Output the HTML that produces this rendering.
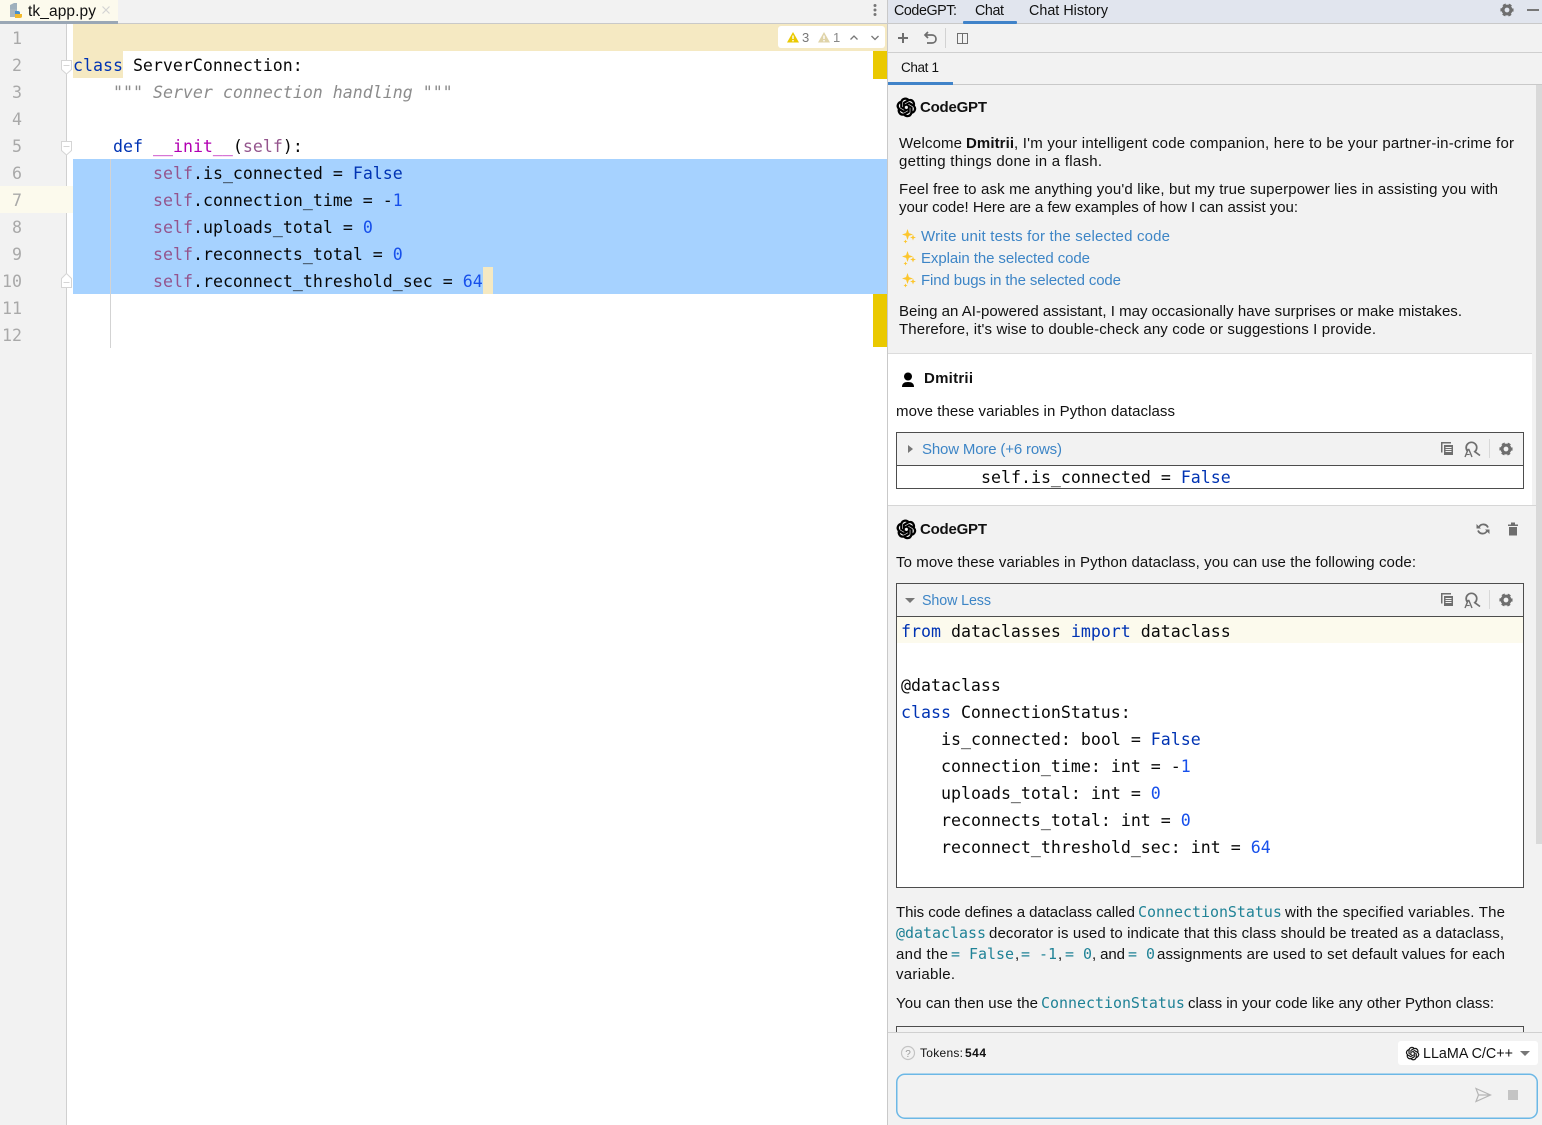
<!DOCTYPE html>
<html><head><meta charset="utf-8"><title>tk_app.py</title>
<style>
html,body{margin:0;padding:0;background:#fff;width:1542px;height:1125px;overflow:hidden}
svg{display:block}
text{white-space:pre}
.c{font-family:"DejaVu Sans Mono","Liberation Mono",monospace;font-size:16.6px;fill:#080808}
.n{font-family:"DejaVu Sans Mono","Liberation Mono",monospace;font-size:16.6px;fill:#a9a9a9}
.u{font-family:"Liberation Sans",sans-serif;font-size:15px;fill:#111}
.h{font-size:14.3px}
.b{font-weight:bold}
.l{fill:#3d85c6}
.m{font-family:"DejaVu Sans Mono","Liberation Mono",monospace;font-size:14.95px;fill:#1f8296}
.k{fill:#0033b3}.s{fill:#94558d}.d{fill:#1750eb}.f{fill:#b200b2}
.i{fill:#8c8c8c;font-style:italic}
</style></head><body>
<svg width="1542" height="1125" viewBox="0 0 1542 1125" xmlns="http://www.w3.org/2000/svg">
<defs>
<path id="ai" d="M22.2819 9.8211a5.9847 5.9847 0 0 0-.5157-4.9108 6.0462 6.0462 0 0 0-6.5098-2.9A6.0651 6.0651 0 0 0 4.9807 4.1818a5.9847 5.9847 0 0 0-3.9977 2.9 6.0462 6.0462 0 0 0 .7427 7.0966 5.98 5.98 0 0 0 .511 4.9107 6.051 6.051 0 0 0 6.5146 2.9001A5.9847 5.9847 0 0 0 13.2599 24a6.0557 6.0557 0 0 0 5.7718-4.2058 5.9894 5.9894 0 0 0 3.9977-2.9001 6.0557 6.0557 0 0 0-.7475-7.0729zm-9.022 12.6081a4.4755 4.4755 0 0 1-2.8764-1.0408l.1419-.0804 4.7783-2.7582a.7948.7948 0 0 0 .3927-.6813v-6.7369l2.02 1.1686a.071.071 0 0 1 .038.052v5.5826a4.504 4.504 0 0 1-4.4945 4.4944zm-9.6607-4.1254a4.4708 4.4708 0 0 1-.5346-3.0137l.142.0852 4.783 2.7582a.7712.7712 0 0 0 .7806 0l5.8428-3.3685v2.3324a.0804.0804 0 0 1-.0332.0615L9.74 19.9502a4.4992 4.4992 0 0 1-6.1408-1.6464zM2.3408 7.8956a4.485 4.485 0 0 1 2.3655-1.9728V11.6a.7664.7664 0 0 0 .3879.6765l5.8144 3.3543-2.0201 1.1685a.0757.0757 0 0 1-.071 0l-4.8303-2.7865A4.504 4.504 0 0 1 2.3408 7.872zm16.5963 3.8558L13.1038 8.364 15.1192 7.2a.0757.0757 0 0 1 .071 0l4.8303 2.7913a4.4944 4.4944 0 0 1-.6765 8.1042v-5.6772a.79.79 0 0 0-.407-.667zm2.0107-3.0231l-.142-.0852-4.7735-2.7818a.7759.7759 0 0 0-.7854 0L9.409 9.2297V6.8974a.0662.0662 0 0 1 .0284-.0615l4.8303-2.7866a4.4992 4.4992 0 0 1 6.6802 4.66zM8.3065 12.863l-2.02-1.1638a.0804.0804 0 0 1-.038-.0567V6.0742a4.4992 4.4992 0 0 1 7.3757-3.4537l-.142.0805L8.704 5.459a.7948.7948 0 0 0-.3927.6813zm1.0976-2.3654l2.602-1.4998 2.6069 1.4998v2.9994l-2.5974 1.4997-2.6067-1.4997Z"/>
<g id="gear"><circle r="3.9" fill="none" stroke="#6e6e6e" stroke-width="3"/><circle r="5.5" fill="none" stroke="#6e6e6e" stroke-width="2.2" stroke-dasharray="3 2.76" transform="rotate(-15)"/></g>
<g id="star" fill="#fcc62d"><path d="M5.500 0 6.900 4.100 11 5.500 6.900 6.900 5.500 11 4.100 6.900 0 5.500 4.100 4.100Z"/><path d="M11 5.500 11.800 7.700 14 8.500 11.800 9.300 11 11.500 10.200 9.300 8 8.500 10.200 7.700Z"/><path d="M3.500 10.500 4.100 11.900 5.500 12.500 4.100 13.100 3.500 14.500 2.900 13.100 1.500 12.500 2.900 11.900Z"/></g>
<g id="tools">
<path d="M-34-7h10v1.500h-8.500v9h-1.500z" fill="#6e6e6e"/>
<path d="M-31-4h9v10h-9z" fill="#6e6e6e"/><path d="M-29.500-1.500h6M-29.500 .5h6M-29.500 2.500h6" stroke="#f2f2f2" stroke-width="1"/>
<path d="M-6.200 3.200a5.300 5.300 0 1 1 6 -.5L5 6.500" fill="none" stroke="#6e6e6e" stroke-width="1.700"/>
<path d="M-10 8l3.100-7.500h.8L-3 8" fill="#f2f2f2" stroke="#6e6e6e" stroke-width="1.400"/><path d="M-8.500 5.500h3.200" stroke="#6e6e6e" stroke-width="1.100"/>
<rect x="14" y="-10" width="1" height="19" fill="#d8d8d8"/></g>
</defs>

<!-- editor -->
<rect width="887" height="1125" fill="#fff"/>
<rect x="0" y="0" width="887" height="23" fill="#f2f2f2"/>
<rect x="0" y="23" width="887" height="1" fill="#c9c9c9"/>
<rect x="0" y="0" width="118" height="21" fill="#fcfaed"/>
<rect x="0" y="21" width="118" height="3" fill="#9aa7b5"/>
<!-- file icon -->
<path d="M10 5 14 3h3v6H10z" fill="#9fb0bd"/><rect x="10" y="9" width="7" height="8" fill="#a8b6c0"/>
<path d="M15 11h3c1 0 2 .6 2 1.700v1.300h-5z" fill="#4a8fc7"/><path d="M15 14h7v2.500c0 1-1 1.500-2 1.500h-5z" fill="#f2b92c"/>
<text class="u" x="28" y="16" style="font-size:15.5px" textLength="68" lengthAdjust="spacing">tk_app.py</text>
<path d="M102.500 6.500l7 7M109.500 6.500l-7 7" stroke="#d4d4d4" stroke-width="1.200"/>
<circle cx="875" cy="5.500" r="1.500" fill="#777"/><circle cx="875" cy="10" r="1.500" fill="#777"/><circle cx="875" cy="14.500" r="1.500" fill="#777"/>

<rect x="0" y="24" width="66" height="1101" fill="#f2f2f2"/>
<rect x="66" y="24" width="1" height="1101" fill="#d0d0d0"/>
<rect x="67" y="24" width="6" height="1101" fill="#fff"/>
<rect x="0" y="186" width="73" height="27" fill="#fcfaed"/>
<rect x="73" y="24" width="814" height="27" fill="#f5e9c2"/>
<rect x="73" y="51" width="50" height="27" fill="#f5e9c2"/>
<rect x="73" y="159" width="814" height="135" fill="#a6d2ff"/>
<rect x="483" y="267" width="10" height="27" fill="#f5e9c2"/>
<rect x="110" y="159" width="1" height="189" fill="#d3d3d3"/>
<rect x="873" y="51" width="14" height="28" fill="#eac900"/>
<rect x="873" y="294" width="14" height="53" fill="#eac900"/>

<!-- warnings widget -->
<rect x="778" y="26" width="107" height="22" rx="3" fill="#fff"/>
<path d="M793 32l6 10.500h-12z" fill="#eac900"/><rect x="792.300" y="35.500" width="1.400" height="3.500" fill="#fff"/><rect x="792.300" y="40" width="1.400" height="1.400" fill="#fff"/>
<text class="u" x="802" y="42" style="font-size:13px;fill:#777">3</text>
<path d="M824 32l6 10.500h-12z" fill="#dfd3a8"/><rect x="823.300" y="35.500" width="1.400" height="3.500" fill="#fff"/><rect x="823.300" y="40" width="1.400" height="1.400" fill="#fff"/>
<text class="u" x="833" y="42" style="font-size:13px;fill:#888">1</text>
<path d="M850.500 39.500l3.500-3.500 3.500 3.500M871.500 36l3.500 3.500 3.500-3.500" fill="none" stroke="#777" stroke-width="1.300"/>

<!-- gutter -->
<g text-anchor="end">
<text class="n" x="22" y="44">1</text><text class="n" x="22" y="71">2</text><text class="n" x="22" y="98">3</text><text class="n" x="22" y="125">4</text><text class="n" x="22" y="152">5</text><text class="n" x="22" y="179">6</text><text class="n" x="22" y="206">7</text><text class="n" x="22" y="233">8</text><text class="n" x="22" y="260">9</text><text class="n" x="22" y="287">10</text><text class="n" x="22" y="314">11</text><text class="n" x="22" y="341">12</text>
</g>
<g fill="#fff" stroke="#d5d5d5" stroke-width="1">
<path d="M61.500 60.500h10v9l-5 4.500-5-4.500z"/><path d="M63.500 65.500h6"/>
<path d="M61.500 141.500h10v9l-5 4.500-5-4.500z"/><path d="M63.500 146.500h6"/>
<path d="M61.500 287.500h10v-9l-5-5-5 5z"/><path d="M63.500 282.500h6"/>
</g>

<!-- editor code -->
<text class="c" x="73" y="71"><tspan class="k">class</tspan> ServerConnection:</text>
<text class="c i" x="113" y="98">""" Server connection handling """</text>
<text class="c" x="113" y="152"><tspan class="k">def</tspan> <tspan class="f">__init__</tspan>(<tspan class="s">self</tspan>):</text>
<text class="c" x="153" y="179"><tspan class="s">self</tspan>.is_connected = <tspan class="k">False</tspan></text>
<text class="c" x="153" y="206"><tspan class="s">self</tspan>.connection_time = -<tspan class="d">1</tspan></text>
<text class="c" x="153" y="233"><tspan class="s">self</tspan>.uploads_total = <tspan class="d">0</tspan></text>
<text class="c" x="153" y="260"><tspan class="s">self</tspan>.reconnects_total = <tspan class="d">0</tspan></text>
<text class="c" x="153" y="287"><tspan class="s">self</tspan>.reconnect_threshold_sec = <tspan class="d">64</tspan></text>

<!-- right panel -->
<rect x="887" y="0" width="1" height="1125" fill="#c9c9c9"/>
<rect x="888" y="0" width="654" height="1125" fill="#f2f2f2"/>
<rect x="888" y="0" width="654" height="23" fill="#e1e5ee"/>
<rect x="888" y="23" width="654" height="1" fill="#c9c9c9"/>
<rect x="963" y="21" width="54" height="3" rx="1" fill="#4083c9"/>
<text class="u h" x="894" y="15" textLength="63" lengthAdjust="spacing">CodeGPT:</text>
<text class="u h" x="975" y="15" textLength="29" lengthAdjust="spacing">Chat</text>
<text class="u h" x="1029" y="15" textLength="79" lengthAdjust="spacing">Chat History</text>
<use href="#gear" x="1507" y="10"/>
<rect x="1527" y="9" width="12" height="2" fill="#777"/>

<rect x="888" y="52" width="654" height="1" fill="#cfcfcf"/>
<rect x="888" y="84" width="654" height="1" fill="#c9c9c9"/>
<rect x="888" y="82" width="65" height="3" fill="#4083c9"/>
<path d="M898 38h10M903 33v10" stroke="#6e6e6e" stroke-width="2"/>
<path d="M928 32l-3 3 3 3M925 35h7c2.500 0 4 1.800 4 4s-1.500 4-4 4h-5" fill="none" stroke="#6e6e6e" stroke-width="1.700"/>
<rect x="945" y="28" width="1" height="20" fill="#d2d2d2"/>
<rect x="957.500" y="33.500" width="10" height="10" fill="none" stroke="#6e6e6e"/><path d="M962.500 33.500v10" stroke="#6e6e6e"/>
<text class="u" x="901" y="72" style="font-size:13.500px" textLength="38" lengthAdjust="spacing">Chat 1</text>

<!-- scrollbar -->
<rect x="1536" y="85" width="6" height="759" fill="#d9d9d9"/>

<!-- welcome -->
<use href="#ai" transform="translate(897,98) scale(.78)" stroke="#000" stroke-width="1.300"/>
<text class="u b" x="920" y="112" textLength="67" lengthAdjust="spacing">CodeGPT</text>
<text class="u" x="899" y="148" textLength="63" lengthAdjust="spacing">Welcome</text>
<text class="u b" x="966" y="148" textLength="48" lengthAdjust="spacing">Dmitrii</text>
<text class="u" x="1014" y="148" textLength="500" lengthAdjust="spacing">, I'm your intelligent code companion, here to be your partner-in-crime for</text>
<text class="u" x="899" y="166" textLength="203" lengthAdjust="spacing">getting things done in a flash.</text>
<text class="u" x="899" y="194" textLength="599" lengthAdjust="spacing">Feel free to ask me anything you'd like, but my true superpower lies in assisting you with</text>
<text class="u" x="899" y="212" textLength="399" lengthAdjust="spacing">your code! Here are a few examples of how I can assist you:</text>
<use href="#star" x="902" y="229"/><use href="#star" x="902" y="251"/><use href="#star" x="902" y="273"/>
<text class="u l" x="921" y="241" textLength="249" lengthAdjust="spacing">Write unit tests for the selected code</text>
<text class="u l" x="921" y="263" textLength="169" lengthAdjust="spacing">Explain the selected code</text>
<text class="u l" x="921" y="285" textLength="200" lengthAdjust="spacing">Find bugs in the selected code</text>
<text class="u" x="899" y="316" textLength="563" lengthAdjust="spacing">Being an AI-powered assistant, I may occasionally have surprises or make mistakes.</text>
<text class="u" x="899" y="334" textLength="477" lengthAdjust="spacing">Therefore, it's wise to double-check any code or suggestions I provide.</text>

<!-- user section -->
<rect x="888" y="353" width="644" height="152" fill="#fff"/>
<rect x="888" y="353" width="644" height="1" fill="#dcdcdc"/>
<rect x="888" y="505" width="648" height="1" fill="#d6d6d6"/>
<circle cx="908" cy="376.500" r="4" fill="#000"/><path d="M902 387c0-3.500 2-5 6-5s6 1.500 6 5z" fill="#000"/>
<text class="u b" x="924" y="383" textLength="49" lengthAdjust="spacing">Dmitrii</text>
<text class="u" x="896" y="416" textLength="279" lengthAdjust="spacing">move these variables in Python dataclass</text>
<rect x="896.500" y="432.500" width="627" height="56" fill="#fff" stroke="#4d4d4d"/>
<rect x="897" y="433" width="626" height="32" fill="#f2f2f2"/>
<rect x="897" y="465" width="626" height="1" fill="#4d4d4d"/>
<path d="M908 445l5 4-5 4z" fill="#777"/>
<text class="u l" x="922" y="454" textLength="140" lengthAdjust="spacing">Show More (+6 rows)</text>
<use href="#tools" x="1475" y="449"/>
<use href="#gear" x="1506" y="449"/>
<text class="c" x="981" y="483">self.is_connected = <tspan class="k">False</tspan></text>

<!-- response -->
<use href="#ai" transform="translate(897,520) scale(.78)" stroke="#000" stroke-width="1.300"/>
<text class="u b" x="920" y="534" textLength="67" lengthAdjust="spacing">CodeGPT</text>
<path d="M1488 527.500a5 5 0 0 0-9-.5M1478 530.500a5 5 0 0 0 9 .500" fill="none" stroke="#6e6e6e" stroke-width="1.800"/><path d="M1476.500 524v4.500h4.500zM1489.500 534v-4.500h-4.500z" fill="#6e6e6e"/>
<path d="M1508 524.500h10v1.500h-10zM1511 522.500h4v2h-4zM1509 527h8v8.500h-8z" fill="#6e6e6e"/>
<text class="u" x="896" y="567" textLength="520" lengthAdjust="spacing">To move these variables in Python dataclass, you can use the following code:</text>
<rect x="896.500" y="583.500" width="627" height="304" fill="#fff" stroke="#4d4d4d"/>
<rect x="897" y="584" width="626" height="32" fill="#f2f2f2"/>
<rect x="897" y="616" width="626" height="1" fill="#4d4d4d"/>
<rect x="897" y="617" width="626" height="26" fill="#fcfaed"/>
<path d="M905 598h10l-5 5z" fill="#777"/>
<text class="u l h" x="922" y="605" textLength="69" lengthAdjust="spacing">Show Less</text>
<use href="#tools" x="1475" y="600"/>
<use href="#gear" x="1506" y="600"/>
<text class="c" x="901" y="637"><tspan class="k">from</tspan> dataclasses <tspan class="k">import</tspan> dataclass</text>
<text class="c" x="901" y="691">@dataclass</text>
<text class="c" x="901" y="718"><tspan class="k">class</tspan> ConnectionStatus:</text>
<text class="c" x="941" y="745">is_connected: bool = <tspan class="k">False</tspan></text>
<text class="c" x="941" y="772">connection_time: int = -<tspan class="d">1</tspan></text>
<text class="c" x="941" y="799">uploads_total: int = <tspan class="d">0</tspan></text>
<text class="c" x="941" y="826">reconnects_total: int = <tspan class="d">0</tspan></text>
<text class="c" x="941" y="853">reconnect_threshold_sec: int = <tspan class="d">64</tspan></text>

<!-- explanation -->
<text class="u" x="896" y="917" textLength="239" lengthAdjust="spacing">This code defines a dataclass called</text>
<text class="m" x="1138" y="917">ConnectionStatus</text>
<text class="u" x="1285" y="917" textLength="220" lengthAdjust="spacing">with the specified variables. The</text>
<text class="m" x="896" y="938">@dataclass</text>
<text class="u" x="989" y="938" textLength="515" lengthAdjust="spacing">decorator is used to indicate that this class should be treated as a dataclass,</text>
<text class="u" x="896" y="959" textLength="52" lengthAdjust="spacing">and the</text>
<text class="m" x="951" y="959">= False</text>
<text class="u" x="1015" y="959">,</text>
<text class="m" x="1021" y="959">= -1</text>
<text class="u" x="1058" y="959">,</text>
<text class="m" x="1065" y="959">= 0</text>
<text class="u" x="1092" y="959" textLength="33" lengthAdjust="spacing">, and</text>
<text class="m" x="1128" y="959">= 0</text>
<text class="u" x="1157" y="959" textLength="348" lengthAdjust="spacing">assignments are used to set default values for each</text>
<text class="u" x="896" y="979" textLength="59" lengthAdjust="spacing">variable.</text>
<text class="u" x="896" y="1008" textLength="142" lengthAdjust="spacing">You can then use the</text>
<text class="m" x="1041" y="1008">ConnectionStatus</text>
<text class="u" x="1188" y="1008" textLength="306" lengthAdjust="spacing">class in your code like any other Python class:</text>
<path d="M896.500 1032v-5.500h627v5.500" fill="none" stroke="#4d4d4d"/>

<!-- footer -->
<rect x="888" y="1032" width="654" height="93" fill="#f2f2f2"/>
<rect x="888" y="1032" width="654" height="1" fill="#d0d0d0"/>
<circle cx="908" cy="1053" r="6.500" fill="none" stroke="#c4c4c4" stroke-width="1.200"/>
<text class="u" x="908" y="1057" text-anchor="middle" style="font-size:10px;fill:#999">?</text>
<text class="u" x="920" y="1057" style="font-size:12px" textLength="43" lengthAdjust="spacing">Tokens:</text>
<text class="u b" x="965" y="1057" style="font-size:12px" textLength="21" lengthAdjust="spacing">544</text>
<rect x="1398" y="1041" width="140" height="24" rx="3" fill="#fff"/>
<use href="#ai" transform="translate(1406,1047) scale(.55)" stroke="#222" stroke-width=".7"/>
<text class="u h" x="1423" y="1058" textLength="90" lengthAdjust="spacing">LLaMA C/C++</text>
<path d="M1520 1051h10l-5 5z" fill="#777"/>
<rect x="896.750" y="1074.250" width="640.500" height="44" rx="8" fill="#f2f2f2" stroke="#6cb8e6" stroke-width="1.500"/>
<path d="M1476 1088.500l14.500 6.500-14.500 6.500 2.500-6.500zM1478.500 1095h12" fill="none" stroke="#b5b5b5" stroke-width="1.200"/>
<rect x="1508" y="1090" width="10" height="10" fill="#c4c4c4"/>
</svg>
</body></html>
